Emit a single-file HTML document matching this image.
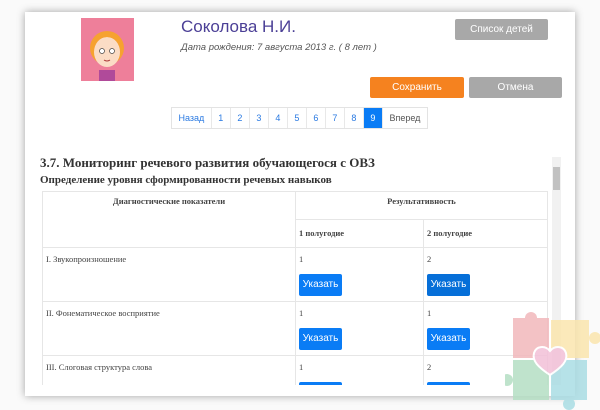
<!DOCTYPE html>
<html><head><meta charset="utf-8"><style>
*{box-sizing:border-box;margin:0;padding:0}
body{width:600px;height:410px;background:#fafafa;position:relative;overflow:hidden;font-family:"Liberation Sans",sans-serif}
.modal{position:absolute;left:25px;top:12px;width:550px;height:384px;background:#fff;box-shadow:0 0 8px rgba(0,0,0,.35)}
.abs{position:absolute}
.btn{position:absolute;color:#fff;font-size:10px;text-align:center;border-radius:2px}
.pg{position:absolute;top:107px;left:171px;height:22px;display:flex;border:1px solid #e3e3e3;font-size:9px}
.pg span{display:block;padding:0 6.5px;line-height:20px;color:#2a7ae2;border-right:1px solid #e8e8e8}
.pg .a{background:#0a7cf5;color:#fff}
.pg .n{color:#555}
.ser{font-family:"Liberation Serif",serif;color:#333}
table{position:absolute;left:41px;top:191px;width:507px;border-collapse:collapse;font-family:"Liberation Serif",serif;font-size:8.5px;color:#444}
td{border:1px solid #e6e6e6;vertical-align:top;padding:4px 3px}
.u{display:block;margin-top:10px;width:43px;height:22px;background:#0a7cf5;color:#fff;border-radius:2px;font-family:"Liberation Sans",sans-serif;font-size:10px;line-height:22px;text-align:center}
</style></head><body>
<div class="modal"></div>
<div class="abs" style="left:81px;top:18px;width:53px;height:63px;background:#ee7f9a">
<svg width="53" height="63"><circle cx="26" cy="30" r="17" fill="#f6a230"/><ellipse cx="26" cy="34" rx="13" ry="15" fill="#fbdcc5"/><path d="M12 26q14-14 28 0q-6-8-14-8t-14 8z" fill="#f6a230"/><circle cx="21" cy="33" r="2.5" fill="#fff" stroke="#444" stroke-width=".7"/><circle cx="31" cy="33" r="2.5" fill="#fff" stroke="#444" stroke-width=".7"/><path d="M23 42q3 2 6 0" stroke="#a33" fill="none"/><rect x="18" y="52" width="16" height="11" fill="#b04a9a"/></svg></div>
<div class="abs" style="left:181px;top:17px;font-size:17px;color:#4b3f96">Соколова Н.И.</div>
<div class="abs" style="left:181px;top:42px;font-size:9.5px;font-style:italic;color:#555">Дата рождения: 7 августа 2013 г. ( 8 лет )</div>
<div class="btn" style="left:455px;top:19px;width:93px;height:21px;line-height:21px;background:#a8a8a8">Список детей</div>
<div class="btn" style="left:370px;top:77px;width:94px;height:21px;line-height:21px;background:#f5821f">Сохранить</div>
<div class="btn" style="left:469px;top:77px;width:93px;height:21px;line-height:21px;background:#a8a8a8">Отмена</div>
<div class="pg"><span>Назад</span><span>1</span><span>2</span><span>3</span><span>4</span><span>5</span><span>6</span><span>7</span><span>8</span><span class="a">9</span><span class="n" style="border:0">Вперед</span></div>
<div class="abs ser" style="left:40px;top:155px;font-size:13px;font-weight:bold">3.7. Мониторинг речевого развития обучающегося с ОВЗ</div>
<div class="abs ser" style="left:40px;top:174px;font-size:11px;font-weight:bold">Определение уровня сформированности речевых навыков</div>
<div class="abs" style="left:42px;top:191px;width:512px;height:194px;overflow:hidden">
<table style="left:0;top:0;width:506px">
<tr style="height:28px"><td rowspan="2" style="width:253px;text-align:center;font-weight:bold">Диагностические показатели</td><td colspan="2" style="text-align:center;font-weight:bold">Результативность</td></tr>
<tr style="height:28px"><td style="width:128px;font-weight:bold;padding-top:8px">1 полугодие</td><td style="font-weight:bold;padding-top:8px">2 полугодие</td></tr>
<tr style="height:54px"><td style="padding-top:6px">I. Звукопроизношение</td><td style="padding-top:6px">1<span class="u">Указать</span></td><td style="padding-top:6px">2<span class="u" style="background:#066fd8">Указать</span></td></tr>
<tr style="height:54px"><td style="padding-top:6px">II. Фонематическое восприятие</td><td style="padding-top:6px">1<span class="u">Указать</span></td><td style="padding-top:6px">1<span class="u">Указать</span></td></tr>
<tr style="height:54px"><td style="padding-top:6px">III. Слоговая структура слова</td><td style="padding-top:6px">1<span class="u">Указать</span></td><td style="padding-top:6px">2<span class="u">Указать</span></td></tr>
</table></div>
<div class="abs" style="left:552px;top:157px;width:9px;height:228px;background:#f1f1f1"></div>
<div class="abs" style="left:553px;top:167px;width:7px;height:23px;background:#c1c1c1"></div>
<svg class="abs" style="left:505px;top:310px;opacity:.85" width="95" height="100">
<rect x="8" y="8" width="36" height="40" fill="#f2b8bc"/><circle cx="26" cy="8" r="6" fill="#f2b8bc"/>
<rect x="46" y="10" width="38" height="38" fill="#fbe6ae"/><circle cx="90" cy="28" r="6" fill="#fbe6ae"/>
<rect x="8" y="50" width="36" height="40" fill="#b5dfc4"/><circle cx="2" cy="70" r="6" fill="#b5dfc4"/>
<rect x="46" y="50" width="36" height="40" fill="#aadde4"/><circle cx="64" cy="94" r="6" fill="#aadde4"/>
<path d="M45 65c-12-8-18-14-16-22c2-7 11-8 16-2c5-6 14-5 16 2c2 8-4 14-16 22z" fill="#f3c0d8" stroke="#fff" stroke-width="2"/></svg>
</body></html>
